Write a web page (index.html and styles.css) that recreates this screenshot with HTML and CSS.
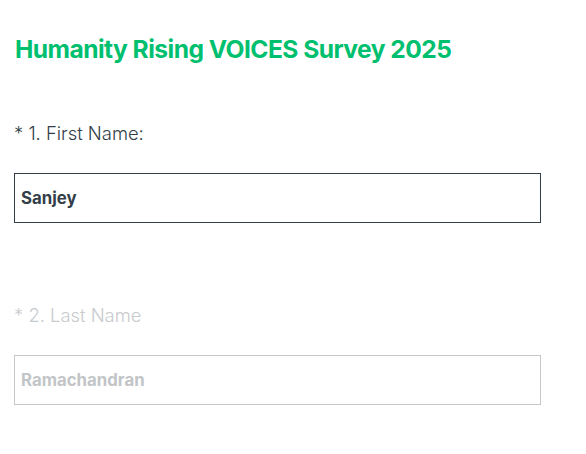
FILE: index.html
```html
<!DOCTYPE html>
<html lang="en">
<head>
<meta charset="utf-8">
<link rel="stylesheet" href="styles.css">
</head>
<body>
<main class="survey">
  <h1 class="title">Humanity Rising VOICES Survey 2025</h1>
  <section class="question">
    <label class="q-label" for="first">* 1. First Name:</label>
    <input class="q-input" id="first" type="text" value="Sanjey">
  </section>
  <section class="question question--inactive">
    <label class="q-label" for="last">* 2. Last Name</label>
    <input class="q-input" id="last" type="text" value="Ramachandran">
  </section>
</main>
</body>
</html>
```
FILE: styles.css
```css
* { box-sizing: border-box; }
html, body { margin: 0; padding: 0; background: #fff; }
body { font-family: Inter, "Noto Sans", sans-serif; color: #333e48; }
.survey { padding: 0 45px 0 14px; display: flex; flex-direction: column; }
.title {
  margin: 34px 0 0 1px;
  font-size: 24.6px;
  font-weight: 700;
  line-height: 30px;
  color: #00bf6f;
  letter-spacing: -0.55px;
}
.question { display: flex; flex-direction: column; }
.question:first-of-type { margin-top: 57px; }
.question + .question { margin-top: 80px; }
.q-label {
  font-size: 18.4px;
  font-weight: 300;
  line-height: 24px;
  color: #333e48;
}
.q-input {
  margin-top: 28px;
  width: 527px;
  height: 50px;
  border: 1px solid #333e48;
  border-radius: 0;
  padding: 0 6px;
  font-family: inherit;
  font-size: 16.8px;
  font-weight: 700;
  color: #333e48;
  background: #fff;
  outline: none;
}
.question--inactive .q-label { color: #c8cbcd; }
.question--inactive .q-input { border-color: #c6c7c8; color: #c2c5c7; }
```
